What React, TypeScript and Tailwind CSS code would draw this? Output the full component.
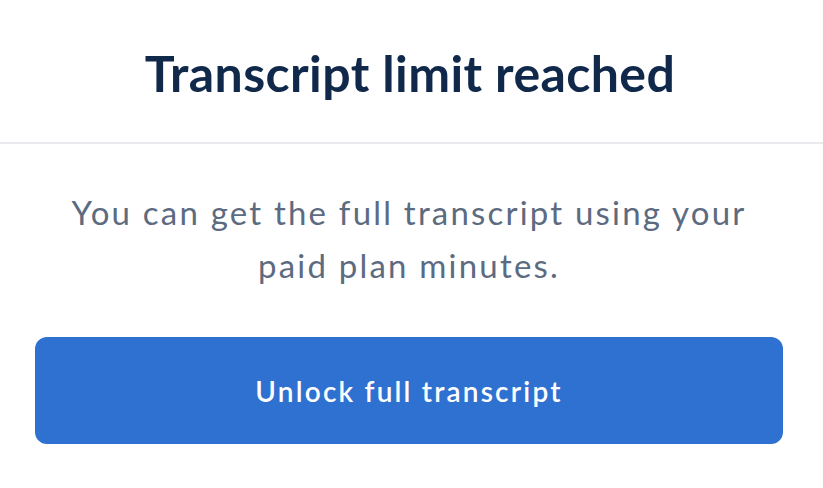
export default function App() {
	return (
		<div
			className="w-[823px] h-[488px] bg-white flex flex-col"
			style={{ fontFamily: 'Lato, "Noto Sans", sans-serif' }}
		>
			<div className="h-[144px] border-b-2 border-[#e9e9ee] flex items-center justify-center pr-[3px]">
				<h1 className="text-[50px] font-bold text-[#10284a] tracking-[0.4px] mt-[4px]">
					Transcript limit reached
				</h1>
			</div>
			<div className="pl-[35px] pr-[40px] pt-[42px] flex flex-col items-center">
				<p className="text-[33px] leading-[53px] text-[#5c6b7f] text-center tracking-[2.2px]">
					You can get the full transcript using your
					<br />
					paid plan minutes.
				</p>
				<button
					type="button"
					className="mt-[45px] w-full h-[107px] rounded-[12px] bg-[#2f71d1] text-white text-[28px] font-semibold tracking-[2.2px]"
				>
					Unlock full transcript
				</button>
			</div>
		</div>
	);
}
